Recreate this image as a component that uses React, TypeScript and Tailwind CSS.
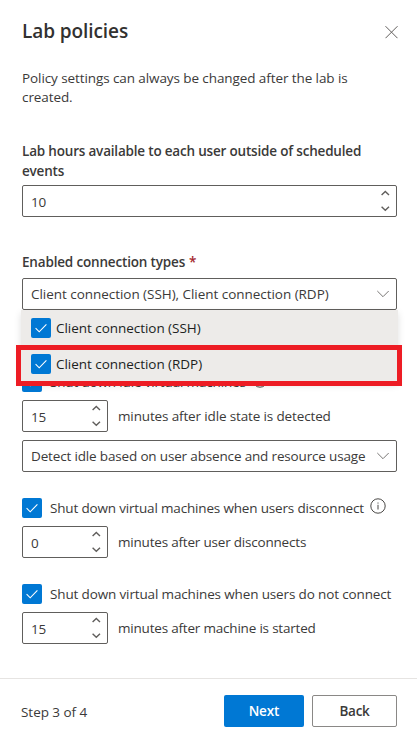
import React from "react";
import clsx from "clsx";

function Check({ className }: { className?: string }) {
  return (
    <span className={clsx("flex h-5 w-5 shrink-0 items-center justify-center rounded-[2px] bg-[#0078d4]", className)}>
      <svg width="20" height="20" viewBox="0 0 20 20" fill="none" stroke="#fff" strokeWidth="1.1">
        <path d="M4.6 10.2 8.2 13.8 15.4 6.4" />
      </svg>
    </span>
  );
}

function SpinBox({ value, wide }: { value: string; wide?: boolean }) {
  return (
    <div
      className={clsx(
        "flex h-8 shrink-0 items-center justify-between rounded-[2px] border border-[#605e5c] pl-2 pr-[6px]",
        wide ? "w-[375px]" : "w-[86px]",
      )}
    >
      <span className="pt-px tracking-[-0.1px]">{value}</span>
      <svg width="10" height="30" viewBox="0 0 10 30" fill="none" stroke="#605e5c" strokeWidth="1.4">
        <path d="M1.6 9 5.3 5.5 9 9" />
        <path d="M1.6 20.8 5.3 24.3 9 20.8" />
      </svg>
    </div>
  );
}

function SelectBox({ children }: { children: React.ReactNode }) {
  return (
    <div className="flex h-8 w-[375px] items-center justify-between rounded-[2px] border border-[#605e5c] pl-2 pr-[6px]">
      {children}
      <svg width="14" height="10" viewBox="0 0 14 10" fill="none" stroke="#797775" strokeWidth="1">
        <path d="M1.3 2 7 7.7 12.7 2" />
      </svg>
    </div>
  );
}

function Info() {
  return (
    <svg width="16" height="16" viewBox="0 0 16 16" fill="none" stroke="#4a4846" strokeWidth="1">
      <circle cx="8" cy="8" r="7.2" />
      <path d="M8 6.8V11.5M8 4.5V5.6" />
    </svg>
  );
}

export default function App() {
  return (
    <div className="flex h-[742px] w-[417px] flex-col overflow-hidden bg-white font-['Open_Sans','Noto_Sans',sans-serif] text-[13.5px] leading-5 text-[#3b3a39]">
      <header className="flex h-[69px] items-start justify-between pl-[22px] pr-[19.5px] pt-[17px]">
        <h1 className="text-[19px] font-semibold leading-7 tracking-[-0.08px] text-[#323130]">Lab policies</h1>
        <svg className="mt-[9px]" width="13" height="13" viewBox="0 0 13 13" fill="none" stroke="#605e5c" strokeWidth="1">
          <path d="M.5 .2 12.5 12.2M12.5 .2 .5 12.2" />
        </svg>
      </header>

      <main className="flex h-[609px] flex-col pl-[22px]">
        <p className="leading-[19px] tracking-[-0.09px]">
          <span>Policy settings can always be changed after the lab is</span>
          <br />
          created.
        </p>

        <div className="mt-[34px] font-semibold tracking-[-0.19px]">
          <span>Lab hours available to each user outside of scheduled</span>
          <br />
          events
        </div>
        <div className="mt-1">
          <SpinBox value="10" wide />
        </div>

        <div className="mt-[35px] font-semibold tracking-[-0.17px]">
          <span>Enabled connection types</span>
          <span className="pl-1 text-[#a4262c]">*</span>
        </div>
        <div className="relative mt-[6px]">
          <SelectBox>
            <span className="tracking-[-0.04px]">Client connection (SSH), Client connection (RDP)</span>
          </SelectBox>
          <div className="absolute -left-px top-8 z-10 w-[377px] bg-[#edebe9] tracking-[-0.04px] text-[#201f1e] shadow-[0_3px_7px_rgba(0,0,0,0.13)]">
            <div className="flex h-9 items-center gap-[5px] pl-[10px]">
              <Check />
              <span>Client connection (SSH)</span>
            </div>
            <div className="flex h-9 items-center gap-[5px] pl-[10px]">
              <Check />
              <span>Client connection (RDP)</span>
            </div>
          </div>
          <div className="absolute -left-[6px] top-[67px] z-20 h-[41px] w-[386px] border-[5px] border-[#ed1c24]" />
        </div>

        <div className="mt-[62px] flex h-5 items-center">
          <Check />
          <span className="pl-2 tracking-[-0.16px]">Shut down idle virtual machines</span>
          <span className="-mt-[5px] pl-[6px]">
            <Info />
          </span>
        </div>
        <div className="mt-2 flex items-center gap-[10px]">
          <SpinBox value="15" />
          <span className="tracking-[-0.14px]">minutes after idle state is detected</span>
        </div>
        <div className="mt-2">
          <SelectBox>
            <span className="tracking-[-0.16px]">Detect idle based on user absence and resource usage</span>
          </SelectBox>
        </div>

        <div className="mt-[26px] flex h-5 items-center">
          <Check />
          <span className="pl-2 tracking-[-0.17px]">Shut down virtual machines when users disconnect</span>
          <span className="-mt-[5px] pl-[6px]">
            <Info />
          </span>
        </div>
        <div className="mt-2 flex items-center gap-[10px]">
          <SpinBox value="0" />
          <span className="tracking-[-0.2px]">minutes after user disconnects</span>
        </div>

        <div className="mt-[26px] flex h-5 items-center">
          <Check />
          <span className="pl-2 tracking-[-0.14px]">Shut down virtual machines when users do not connect</span>
        </div>
        <div className="mt-2 flex items-center gap-[10px]">
          <SpinBox value="15" />
          <span className="tracking-[-0.2px]">minutes after machine is started</span>
        </div>
      </main>

      <footer className="flex h-16 items-start border-t border-[#e6e4e2] pl-[21px] pr-5 pt-4">
        <span className="flex-1 pt-[7px] tracking-[-0.04px]">Step 3 of 4</span>
        <button className="h-8 w-20 rounded-[2px] bg-[#0078d4] font-semibold tracking-[-0.1px] text-white">Next</button>
        <button className="ml-2 h-8 w-[85px] rounded-[2px] border border-[#8a8886] font-semibold tracking-[-0.3px]">Back</button>
      </footer>
    </div>
  );
}
